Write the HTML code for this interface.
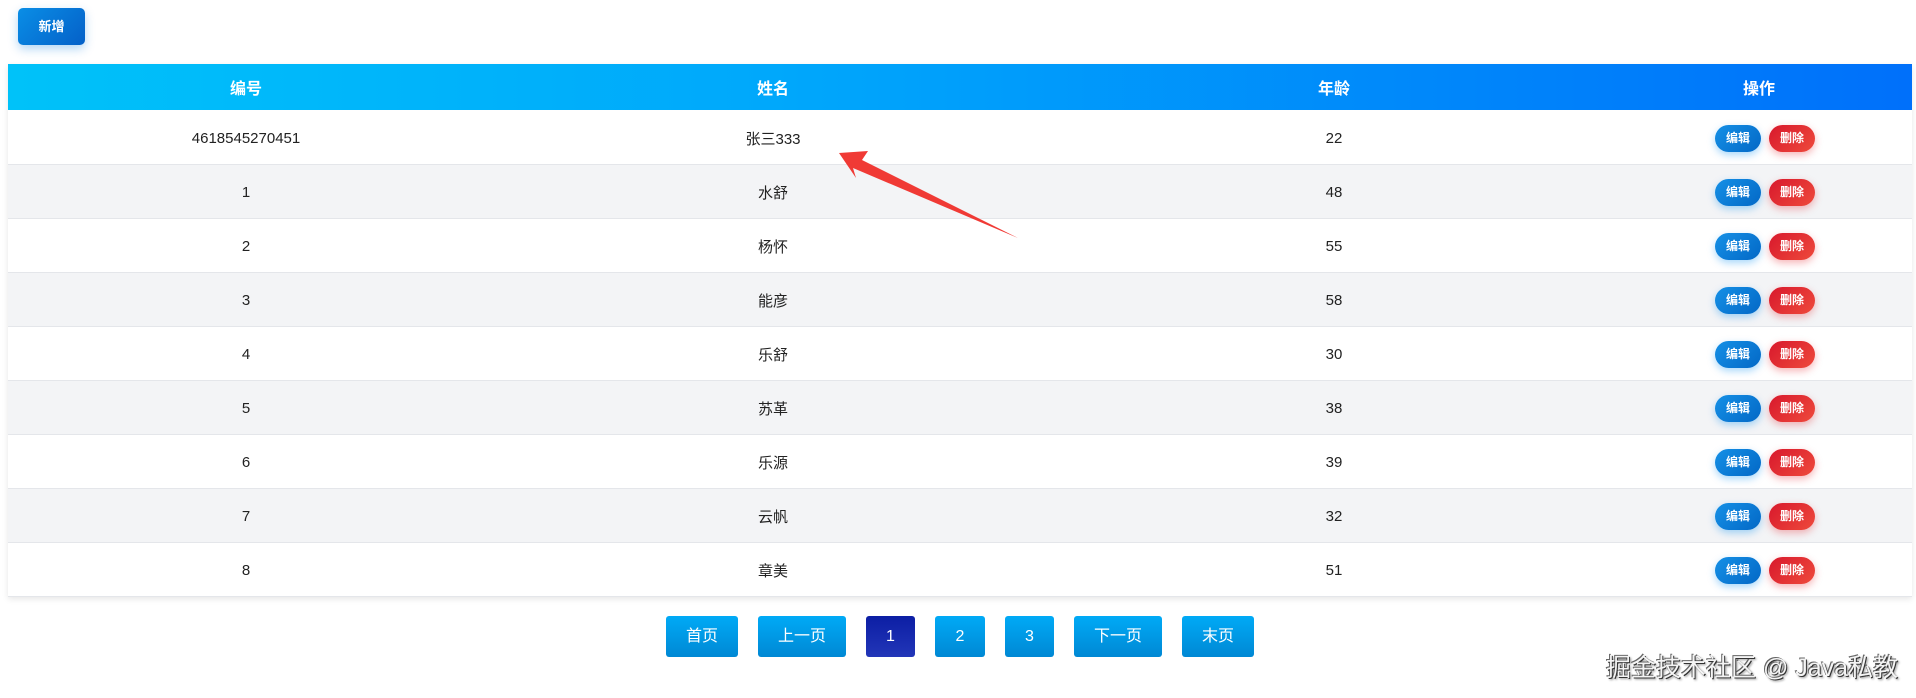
<!DOCTYPE html>
<html><head><meta charset="utf-8"><style>
*{margin:0;padding:0;box-sizing:border-box}
body{width:1916px;height:698px;background:#fff;font-family:"Liberation Sans","Noto Sans CJK SC",sans-serif;position:relative;overflow:hidden}
.add{position:absolute;left:18px;top:8px;width:67px;height:37px;border-radius:5px;background:linear-gradient(135deg,#0a8ee6,#0460c8);color:#fff;font-weight:bold;font-size:13px;text-align:center;line-height:37px;box-shadow:0 4px 10px rgba(0,120,220,.3)}
table{position:absolute;left:8px;top:64px;width:1904px;border-collapse:collapse;box-shadow:0 2px 6px rgba(0,0,0,.1)}
th{height:46px;color:#fff;font-size:16px;font-weight:bold}
thead tr{background:linear-gradient(90deg,#00c2f9,#00a8fb 40%,#0070fa)}
td{height:54px;text-align:center;font-size:15px;color:#222;border-bottom:1px solid #e4e6ea;padding-top:3px}
td:last-child{padding-left:12px}
tbody tr:nth-child(even){background:#f3f4f6}
.b{display:inline-block;width:46px;height:27px;border-radius:14px;color:#fff;font-size:12px;font-weight:bold;line-height:27px;margin:0 4px;vertical-align:middle}
.e{background:linear-gradient(135deg,#1590e6,#0368c6);box-shadow:0 3px 8px rgba(0,140,240,.35)}
.d{background:linear-gradient(135deg,#d8182c,#ee4a3c);box-shadow:0 3px 8px rgba(230,40,50,.35)}
.p{position:absolute;top:616px;height:41px;border-radius:3px;background:linear-gradient(180deg,#00aaf6,#0088d4);color:#fff;font-size:16px;text-align:center;line-height:41px}
.w{position:absolute;left:1606px;top:648px;font-size:25px;color:#f4f4f4;text-shadow:1px 1px 0 #333,-1px -1px 0 #666,2px 2px 2px #999;white-space:nowrap}
</style></head><body>
<div class="add">新增</div>
<table>
<colgroup><col style="width:476px"><col style="width:578px"><col style="width:544px"><col></colgroup>
<thead><tr><th>编号</th><th>姓名</th><th>年龄</th><th>操作</th></tr></thead>
<tbody>
<tr><td>4618545270451</td><td>张三333</td><td>22</td><td><span class="b e">编辑</span><span class="b d">删除</span></td></tr>
<tr><td>1</td><td>水舒</td><td>48</td><td><span class="b e">编辑</span><span class="b d">删除</span></td></tr>
<tr><td>2</td><td>杨怀</td><td>55</td><td><span class="b e">编辑</span><span class="b d">删除</span></td></tr>
<tr><td>3</td><td>能彦</td><td>58</td><td><span class="b e">编辑</span><span class="b d">删除</span></td></tr>
<tr><td>4</td><td>乐舒</td><td>30</td><td><span class="b e">编辑</span><span class="b d">删除</span></td></tr>
<tr><td>5</td><td>苏革</td><td>38</td><td><span class="b e">编辑</span><span class="b d">删除</span></td></tr>
<tr><td>6</td><td>乐源</td><td>39</td><td><span class="b e">编辑</span><span class="b d">删除</span></td></tr>
<tr><td>7</td><td>云帆</td><td>32</td><td><span class="b e">编辑</span><span class="b d">删除</span></td></tr>
<tr><td>8</td><td>章美</td><td>51</td><td><span class="b e">编辑</span><span class="b d">删除</span></td></tr>
</tbody></table>
<svg style="position:absolute;left:0;top:0" width="1916" height="698"><polygon points="839,153 868,151 862,160 1018,238 853,168 856,178" fill="#f03a35"/></svg>
<div class="p" style="left:666px;width:72px">首页</div>
<div class="p" style="left:758px;width:88px">上一页</div>
<div class="p" style="left:866px;width:49px;background:linear-gradient(180deg,#0c1ea4,#2236b8)">1</div>
<div class="p" style="left:935px;width:50px">2</div>
<div class="p" style="left:1005px;width:49px">3</div>
<div class="p" style="left:1074px;width:88px">下一页</div>
<div class="p" style="left:1182px;width:72px">末页</div>
<div class="w">掘金技术社区 @ Java私教</div>
</body></html>
